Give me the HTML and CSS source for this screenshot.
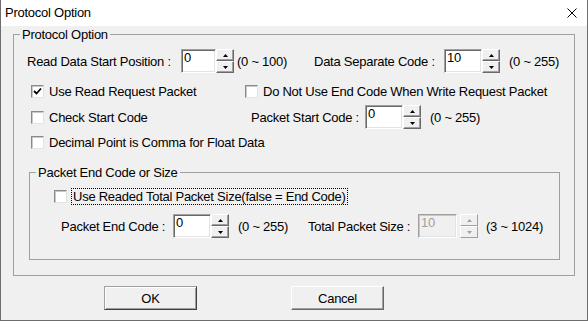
FILE: index.html
```html
<!DOCTYPE html>
<html lang="en">
<head>
    <meta charset="UTF-8">
    <title>Protocol Option</title>
    <link rel="stylesheet" href="styles.css">
</head>
<body>
    <div class="window">
        <div class="titlebar">
            <span class="title">Protocol Option</span>
            <svg class="close" width="10" height="10" viewBox="0 0 10 10"><path d="M0.5 0.5L9.5 9.5M9.5 0.5L0.5 9.5" stroke="#000" stroke-width="1"/></svg>
        </div>
        <div class="client">
            <fieldset class="group outer">
                <legend>Protocol Option</legend>

                <div class="row row-first pad-label">
                    <span class="lbl lbl-start">Read Data Start Position :</span>
                    <span class="spin"><span class="edit narrow">0</span><span class="arrows"><span class="arrow"><svg width="5" height="3" viewBox="0 0 5 3"><path d="M0 3L2.5 0L5 3Z"/></svg></span><span class="arrow"><svg width="5" height="3" viewBox="0 0 5 3"><path d="M0 0L5 0L2.5 3Z"/></svg></span></span></span>
                    <span class="range range-start">(0 ~ 100)</span>
                    <span class="lbl lbl-sep">Data Separate Code :</span>
                    <span class="spin"><span class="edit">10</span><span class="arrows"><span class="arrow"><svg width="5" height="3" viewBox="0 0 5 3"><path d="M0 3L2.5 0L5 3Z"/></svg></span><span class="arrow"><svg width="5" height="3" viewBox="0 0 5 3"><path d="M0 0L5 0L2.5 3Z"/></svg></span></span></span>
                    <span class="range">(0 ~ 255)</span>
                </div>

                <div class="row row-check pad-check gap-a">
                    <span class="check check-wide"><span class="box"><svg width="9" height="9" viewBox="0 0 9 9"><path d="M1 4L3.5 6.5L8 1.5" fill="none" stroke="#000" stroke-width="1.8"/></svg></span>Use Read Request Packet</span>
                    <span class="check"><span class="box"></span>Do Not Use End Code When Write Request Packet</span>
                </div>

                <div class="row row-spin pad-check gap-b">
                    <span class="check check-wider"><span class="box"></span>Check Start Code</span>
                    <span class="lbl lbl-pstart">Packet Start Code :</span>
                    <span class="spin"><span class="edit">0</span><span class="arrows"><span class="arrow"><svg width="5" height="3" viewBox="0 0 5 3"><path d="M0 3L2.5 0L5 3Z"/></svg></span><span class="arrow"><svg width="5" height="3" viewBox="0 0 5 3"><path d="M0 0L5 0L2.5 3Z"/></svg></span></span></span>
                    <span class="range">(0 ~ 255)</span>
                </div>

                <div class="row row-check pad-check gap-c">
                    <span class="check"><span class="box"></span>Decimal Point is Comma for Float Data</span>
                </div>

                <fieldset class="group inner">
                    <legend>Packet End Code or Size</legend>

                    <div class="row row-check pad-inner-check gap-d">
                        <span class="check"><span class="box"></span><span class="focus">Use Readed Total Packet Size(false = End Code)</span></span>
                    </div>

                    <div class="row row-spin pad-inner-label gap-e">
                        <span class="lbl lbl-pend">Packet End Code :</span>
                        <span class="spin"><span class="edit">0</span><span class="arrows"><span class="arrow"><svg width="5" height="3" viewBox="0 0 5 3"><path d="M0 3L2.5 0L5 3Z"/></svg></span><span class="arrow"><svg width="5" height="3" viewBox="0 0 5 3"><path d="M0 0L5 0L2.5 3Z"/></svg></span></span></span>
                        <span class="range range-pend">(0 ~ 255)</span>
                        <span class="lbl lbl-total">Total Packet Size :</span>
                        <span class="spin off"><span class="edit">10</span><span class="arrows"><span class="arrow"><svg width="5" height="3" viewBox="0 0 5 3"><path d="M0 3L2.5 0L5 3Z"/></svg></span><span class="arrow"><svg width="5" height="3" viewBox="0 0 5 3"><path d="M0 0L5 0L2.5 3Z"/></svg></span></span></span>
                        <span class="range range-total">(3 ~ 1024)</span>
                    </div>
                </fieldset>
            </fieldset>

            <div class="buttons">
                <button class="btn btn-ok">OK</button>
                <button class="btn btn-cancel">Cancel</button>
            </div>
        </div>
    </div>
</body>
</html>
```

FILE: styles.css
```css
* { box-sizing: border-box; }
body {
    margin: 0;
    font: 13px/15px "Liberation Sans", Arial, sans-serif;
    letter-spacing: -0.25px;
    color: #000;
}
.window {
    width: 588px;
    height: 321px;
    border: 1px solid #6d6d6d;
    border-top: none;
    background: #f0f0f0;
    display: flex;
    flex-direction: column;
}
.titlebar {
    height: 26px;
    flex: none;
    background: #fff;
    display: flex;
    align-items: center;
    justify-content: space-between;
    padding: 0 10px 1px 4px;
}
.client { flex: 1; padding: 1px 12px 0; }

/* group boxes */
.group {
    margin: 0;
    padding: 0;
    border: 1px solid #a0a0a0;
    min-width: 0;
}
.group legend { margin-left: 6px; padding: 0 2px; line-height: 15px; }
.outer { padding-bottom: 15px; }
.inner { margin: 14px 14px 0 15px; padding-bottom: 21px; }

/* rows */
.row { display: flex; align-items: center; white-space: nowrap; }
.row-first { height: 24px; margin-top: 7px; }
.row-check { height: 18px; }
.row-spin { height: 24px; }
.pad-label { padding-left: 13px; }
.pad-check { padding-left: 17px; }
.pad-inner-check { padding-left: 24px; }
.pad-inner-label { padding-left: 31px; }
.gap-a { margin-top: 9px; }
.gap-b { margin-top: 5px; }
.gap-c { margin-top: 4px; }
.gap-d { margin-top: 7px; }
.gap-e { margin-top: 9px; }

.lbl { flex: none; }
.lbl-start { width: 154px; }
.lbl-sep { width: 130px; }
.lbl-pstart { width: 114px; }
.lbl-pend { width: 112px; }
.lbl-total { width: 110px; }
.range { margin-left: 9px; flex: none; }
.range-start { margin-left: 3px; width: 77px; }
.range-pend { width: 70px; }
.range-total { margin-left: 8px; }

/* checkboxes */
.check { display: flex; align-items: center; flex: none; }
.check-wide { width: 214px; }
.check-wider { width: 220px; }
.box {
    width: 13px;
    height: 13px;
    margin-right: 5px;
    background: #fff;
    border: 1px solid;
    border-color: #8a8a8a #e3e3e3 #e3e3e3 #8a8a8a;
    box-shadow: inset 1px 1px 0 #c9c9c9;
    display: flex;
    align-items: center;
    justify-content: center;
}
.focus { outline: 1px dotted #000; outline-offset: 0; padding: 0 1px; }

/* spin boxes */
.spin { display: flex; flex: none; height: 24px; }
.edit {
    width: 38px;
    height: 24px;
    padding: 0 0 0 2px;
    line-height: 11px;
    background: #fff;
    border: 1px solid;
    border-color: #a0a0a0 #fff #fff #a0a0a0;
    box-shadow: inset 1px 1px 0 #696969, inset -1px -1px 0 #e3e3e3;
    padding-top: 2px;
}
.edit.narrow { width: 35px; }
.arrows { width: 18px; display: flex; flex-direction: column; }
.arrow {
    flex: 1;
    display: flex;
    align-items: center;
    justify-content: center;
    background: #f0f0f0;
    border: 1px solid;
    border-color: #fff #696969 #696969 #fff;
    box-shadow: inset -1px -1px 0 #a0a0a0;
}
.arrow svg { fill: #000; }
.spin.off .edit {
    width: 39px;
    margin-right: 3px;
    color: #a0a0a0;
    background: #f0f0f0;
    border-color: #a0a0a0 #fff #fff #a0a0a0;
    box-shadow: inset 1px 1px 0 #c8c8c8, inset -1px -1px 0 #e3e3e3;
}
.spin.off .arrow { border-color: #fff #a0a0a0 #a0a0a0 #fff; box-shadow: none; }
.spin.off .arrow svg { fill: #a0a0a0; }

/* dialog buttons */
.buttons { display: flex; margin-top: 10px; }
.btn {
    width: 93px;
    height: 24px;
    padding: 0;
    font: inherit;
    letter-spacing: inherit;
    color: #000;
    background: #f0f0f0;
    border: 1px solid;
    border-color: #fff #696969 #696969 #fff;
    box-shadow: inset -1px -1px 0 #a0a0a0;
}
.btn-ok { margin-left: 91px; border-color: #a0a0a0 #404040 #404040 #a0a0a0; box-shadow: inset 1px 1px 0 #fff, inset -1px -1px 0 #a0a0a0; }
.btn-cancel { margin-left: 94px; }
```
